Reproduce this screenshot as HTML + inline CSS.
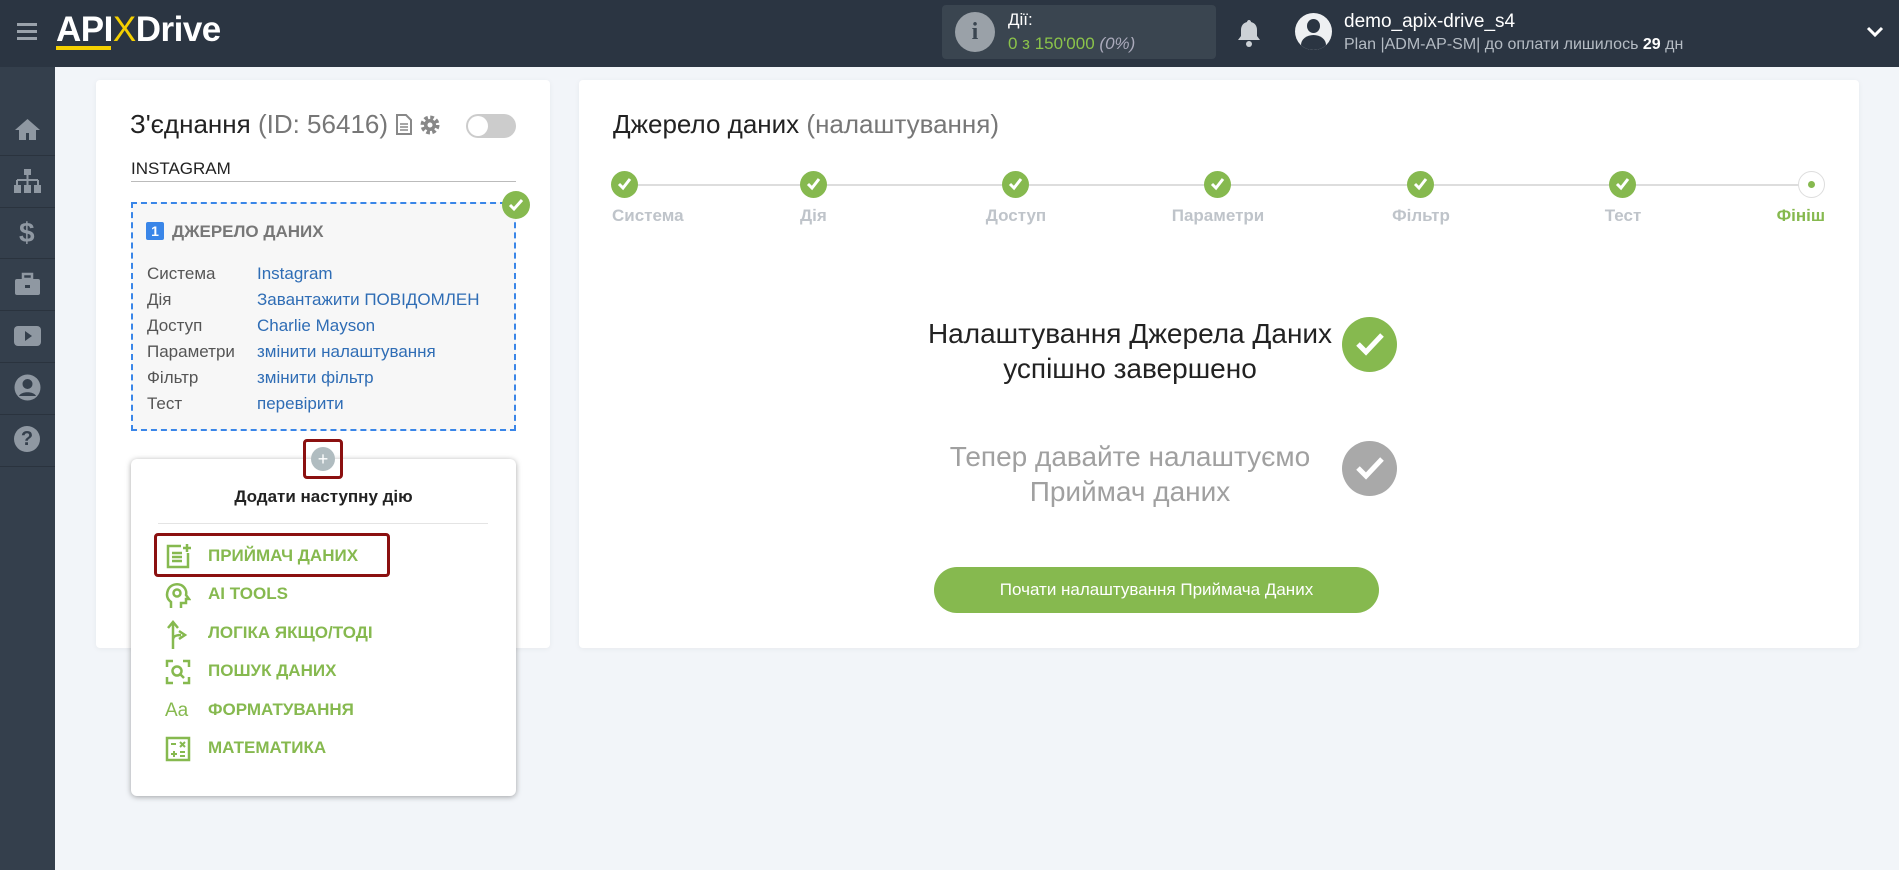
<!DOCTYPE html>
<html><head><meta charset="utf-8"><style>
*{box-sizing:border-box;margin:0;padding:0}
body{width:1899px;height:870px;overflow:hidden;background:#f2f5f9;font-family:"Liberation Sans","Noto Sans CJK SC",sans-serif;position:relative;color:#222}
.abs{position:absolute}
#hdr{left:0;top:0;width:1899px;height:67px;background:#2b3542}
#side{left:0;top:67px;width:55px;height:803px;background:#343f4c}
.sep{position:absolute;left:0;width:55px;height:1px;background:#2a333e}
.card{background:#fff;border-radius:4px;box-shadow:0 1px 6px rgba(0,0,0,.05)}
.row{position:absolute;left:147px;font-size:17px;color:#555}
.val{position:absolute;left:257px;font-size:17px;color:#2f6db5}
.step{position:absolute;top:171px;width:27px;height:27px;border-radius:50%;background:#86b94f}
.step svg{position:absolute;left:6px;top:6px}
.lbl{position:absolute;top:206px;font-size:17px;font-weight:bold;color:#bfc4ca}
.mi{position:absolute;left:208px;font-size:17px;font-weight:bold;color:#86b94f}
.ic{position:absolute;left:165px}
</style></head><body>
<div id="hdr" class="abs"></div>
<div class="abs" style="left:17px;top:23px;width:20px;height:3px;background:#9aa2ab"></div>
<div class="abs" style="left:17px;top:30px;width:20px;height:3px;background:#9aa2ab"></div>
<div class="abs" style="left:17px;top:37px;width:20px;height:3px;background:#9aa2ab"></div>
<div class="abs" style="left:56px;top:10px;font-size:35px;font-weight:bold;color:#fff;letter-spacing:-0.5px">API<span style="color:#f5d000;font-weight:normal">X</span>Drive</div>
<div class="abs" style="left:56px;top:46px;width:55px;height:4px;background:#f5d000"></div>
<div class="abs" style="left:942px;top:5px;width:274px;height:54px;background:#3a4550;border-radius:4px"></div>
<div class="abs" style="left:955px;top:12px;width:40px;height:40px;border-radius:50%;background:#9aa1a8;color:#3a4550;font:bold 24px 'Liberation Serif',serif;text-align:center;line-height:40px">i</div>
<div class="abs" style="left:1008px;top:10px;font-size:17px;color:#fff">Дії:</div>
<div class="abs" style="left:1008px;top:34px;font-size:17px;color:#8bc34a">0 з 150'000 <i style="color:#aab">(0%)</i></div>
<svg class="abs" style="left:1236px;top:18px" width="26" height="30" viewBox="0 0 26 30"><path d="M13 2c1 0 2 1 2 2 4 1 6 4 6 8v6l3 4H2l3-4v-6c0-4 2-7 6-8 0-1 1-2 2-2z" fill="#ccd1d6"/><circle cx="13" cy="26" r="3" fill="#ccd1d6"/></svg>
<div class="abs" style="left:1295px;top:13px;width:37px;height:37px;border-radius:50%;background:#eef0f2;overflow:hidden">
<div class="abs" style="left:12px;top:6px;width:13px;height:14px;border-radius:50%;background:#2b3542"></div>
<div class="abs" style="left:6px;top:22px;width:25px;height:20px;border-radius:50%;background:#2b3542"></div></div>
<div class="abs" style="left:1344px;top:11px;font-size:19px;color:#fff">demo_apix-drive_s4</div>
<div class="abs" style="left:1344px;top:36px;font-size:16px;color:#b5bcc4">Plan |ADM-AP-SM| до оплати лишилось <b style="color:#fff">29</b> дн</div>
<svg class="abs" style="left:1866px;top:26px" width="18" height="12"><path d="M2 2l7 7 7-7" stroke="#fff" stroke-width="3" fill="none"/></svg>

<div id="side" class="abs">
<div class="sep" style="top:88px"></div><div class="sep" style="top:140px"></div><div class="sep" style="top:191px"></div><div class="sep" style="top:243px"></div><div class="sep" style="top:295px"></div><div class="sep" style="top:347px"></div><div class="sep" style="top:399px"></div>
</div>
<svg class="abs" style="left:14px;top:117px" width="27" height="24"><path d="M13.5 2L1 13h4v10h7v-7h3v7h7V13h4z" fill="#8f98a2"/></svg>
<svg class="abs" style="left:13px;top:168px" width="29" height="26"><rect x="11" y="1" width="7" height="6" fill="#8f98a2"/><path d="M14.5 7v5M4 12h21M4 12v5M14.5 12v5M25 12v5" stroke="#8f98a2" stroke-width="2"/><rect x="1" y="17" width="7" height="8" fill="#8f98a2"/><rect x="11" y="17" width="7" height="8" fill="#8f98a2"/><rect x="21" y="17" width="7" height="8" fill="#8f98a2"/></svg>
<div class="abs" style="left:19px;top:217px;font-size:28px;font-weight:bold;color:#8f98a2">$</div>
<svg class="abs" style="left:14px;top:272px" width="27" height="24"><rect x="9" y="2" width="9" height="5" fill="none" stroke="#8f98a2" stroke-width="2.5"/><rect x="1" y="7" width="25" height="16" rx="2" fill="#8f98a2"/><rect x="11" y="13" width="5" height="3" fill="#343f4c"/></svg>
<svg class="abs" style="left:14px;top:325px" width="27" height="22"><rect x="0" y="1" width="27" height="20" rx="4" fill="#8f98a2"/><path d="M11 6l7 5-7 5z" fill="#343f4c"/></svg>
<svg class="abs" style="left:14px;top:374px" width="27" height="27"><circle cx="13.5" cy="13.5" r="13" fill="#8f98a2"/><circle cx="13.5" cy="10" r="5" fill="#343f4c"/><path d="M5 22c2-5 15-5 17 0" fill="#343f4c"/></svg>
<div class="abs" style="left:14px;top:426px;width:26px;height:26px;border-radius:50%;background:#8f98a2;color:#343f4c;font-weight:bold;font-size:20px;text-align:center;line-height:26px">?</div>

<div class="abs card" style="left:96px;top:80px;width:454px;height:568px"></div>
<div class="abs" style="left:130px;top:109px;font-size:26px;color:#222">З'єднання <span style="color:#777">(ID: 56416)</span></div>
<svg class="abs" style="left:396px;top:114px" width="16" height="21"><path d="M1 1h9l5 5v14H1z" fill="none" stroke="#888" stroke-width="2"/><path d="M4 10h8M4 13h8M4 16h8" stroke="#888" stroke-width="1.5"/></svg>
<svg class="abs" style="left:419px;top:114px" width="22" height="22" viewBox="0 0 22 22"><circle cx="11" cy="11" r="7" fill="none" stroke="#888" stroke-width="5" stroke-dasharray="3.3 2.2"/><circle cx="11" cy="11" r="6" fill="#888"/><circle cx="11" cy="11" r="2.5" fill="#fff"/></svg>
<div class="abs" style="left:466px;top:114px;width:50px;height:24px;border-radius:12px;background:#ccc"><div class="abs" style="left:2px;top:2px;width:20px;height:20px;border-radius:50%;background:#fff"></div></div>
<div class="abs" style="left:131px;top:159px;font-size:17px;color:#222">INSTAGRAM</div>
<div class="abs" style="left:131px;top:181px;width:385px;height:1px;background:#bbb"></div>
<div class="abs" style="left:131px;top:202px;width:385px;height:229px;border:2px dashed #3a86e8;background:#f7f7f7"></div>
<div class="abs" style="left:502px;top:191px;width:28px;height:28px;border-radius:50%;background:#86b94f"><svg class="abs" style="left:6px;top:7px" width="16" height="14"><path d="M2 7l4 4 8-9" stroke="#fff" stroke-width="3" fill="none"/></svg></div>
<div class="abs" style="left:146px;top:222px;width:18px;height:18px;background:#3a86e8;border-radius:2px;color:#fff;font-size:14px;font-weight:bold;text-align:center;line-height:18px">1</div>
<div class="abs" style="left:172px;top:222px;font-size:17px;font-weight:bold;color:#777">ДЖЕРЕЛО ДАНИХ</div>
<div class="row" style="top:264px">Система</div><div class="val" style="top:264px">Instagram</div>
<div class="row" style="top:290px">Дія</div><div class="val" style="top:290px">Завантажити ПОВІДОМЛЕН</div>
<div class="row" style="top:316px">Доступ</div><div class="val" style="top:316px">Charlie Mayson</div>
<div class="row" style="top:342px">Параметри</div><div class="val" style="top:342px">змінити налаштування</div>
<div class="row" style="top:368px">Фільтр</div><div class="val" style="top:368px">змінити фільтр</div>
<div class="row" style="top:394px">Тест</div><div class="val" style="top:394px">перевірити</div>

<div class="abs" style="left:131px;top:459px;width:385px;height:337px;background:#fff;border-radius:6px;box-shadow:0 1px 6px rgba(0,0,0,.35)"></div>
<div class="abs" style="left:303px;top:439px;width:40px;height:40px;border:3px solid #8b1010;border-radius:4px"></div>
<div class="abs" style="left:311px;top:447px;width:24px;height:24px;border-radius:50%;background:#b0bcc0;color:#fff;text-align:center;line-height:24px;font-size:18px">+</div>
<div class="abs" style="left:131px;top:487px;width:385px;text-align:center;font-size:17px;font-weight:bold;color:#222">Додати наступну дію</div>
<div class="abs" style="left:158px;top:523px;width:330px;height:1px;background:#e4e4e4"></div>
<div class="abs" style="left:154px;top:533px;width:236px;height:44px;border:3px solid #8b1010;border-radius:4px"></div>
<div class="mi" style="top:546px">ПРИЙМАЧ ДАНИХ</div>
<div class="mi" style="top:584px">AI TOOLS</div>
<div class="mi" style="top:623px">ЛОГІКА ЯКЩО/ТОДІ</div>
<div class="mi" style="top:661px">ПОШУК ДАНИХ</div>
<div class="mi" style="top:700px">ФОРМАТУВАННЯ</div>
<div class="mi" style="top:738px">МАТЕМАТИКА</div>
<svg class="ic" style="top:543px" width="26" height="26"><path d="M16 3H3v21h20V10" fill="none" stroke="#86b94f" stroke-width="2.5"/><path d="M7 10h10M7 14h10M7 18h10M22 1v8M18 5h8" stroke="#86b94f" stroke-width="2.5"/></svg>
<svg class="ic" style="top:582px" width="26" height="28"><path d="M6 26v-6C2 17 1 13 3 8c2-5 8-7 13-5 4 2 6 6 5 10l3 4h-3v4h-5v5" fill="none" stroke="#86b94f" stroke-width="2.5"/><circle cx="12" cy="11" r="3.5" fill="none" stroke="#86b94f" stroke-width="2.5"/></svg>
<svg class="ic" style="top:620px" width="26" height="30"><path d="M8 29V3M3 8l5-6 5 6M8 20c0-4 3-5 8-5M14 11l6 4-6 4" fill="none" stroke="#86b94f" stroke-width="2.5"/></svg>
<svg class="ic" style="top:659px" width="26" height="26"><path d="M2 8V2h6M18 2h6v6M24 18v6h-6M8 24H2v-6" fill="none" stroke="#86b94f" stroke-width="2.5"/><circle cx="12" cy="12" r="4.5" fill="none" stroke="#86b94f" stroke-width="2.5"/><path d="M15 15l4 4" stroke="#86b94f" stroke-width="2.5"/></svg>
<div class="abs" style="left:165px;top:700px;font-size:19px;color:#86b94f">Aa</div>
<svg class="ic" style="top:736px" width="26" height="26"><rect x="2" y="2" width="22" height="22" fill="none" stroke="#86b94f" stroke-width="2.5"/><path d="M6 8h5M15 6l5 5M20 6l-5 5M6 18h6M9 15v6M15 16h5M15 20h5" stroke="#86b94f" stroke-width="2"/></svg>

<div class="abs card" style="left:579px;top:80px;width:1280px;height:568px"></div>
<div class="abs" style="left:613px;top:109px;font-size:26px;color:#222">Джерело даних <span style="color:#777">(налаштування)</span></div>
<div class="abs" style="left:625px;top:184px;width:1187px;height:2px;background:#ddd"></div>
<div class="step" style="left:611px"><svg width="15" height="14"><path d="M2 7l4 4 7-9" stroke="#fff" stroke-width="3" fill="none"/></svg></div>
<div class="step" style="left:800px"><svg width="15" height="14"><path d="M2 7l4 4 7-9" stroke="#fff" stroke-width="3" fill="none"/></svg></div>
<div class="step" style="left:1002px"><svg width="15" height="14"><path d="M2 7l4 4 7-9" stroke="#fff" stroke-width="3" fill="none"/></svg></div>
<div class="step" style="left:1204px"><svg width="15" height="14"><path d="M2 7l4 4 7-9" stroke="#fff" stroke-width="3" fill="none"/></svg></div>
<div class="step" style="left:1407px"><svg width="15" height="14"><path d="M2 7l4 4 7-9" stroke="#fff" stroke-width="3" fill="none"/></svg></div>
<div class="step" style="left:1609px"><svg width="15" height="14"><path d="M2 7l4 4 7-9" stroke="#fff" stroke-width="3" fill="none"/></svg></div>
<div class="step" style="left:1798px;background:#fff;border:1px solid #ddd"><div class="abs" style="left:9px;top:9px;width:7px;height:7px;border-radius:50%;background:#86b94f"></div></div>
<div class="lbl" style="left:612px">Система</div>
<div class="lbl" style="left:800px">Дія</div>
<div class="lbl" style="left:966px;width:100px;text-align:center">Доступ</div>
<div class="lbl" style="left:1158px;width:120px;text-align:center">Параметри</div>
<div class="lbl" style="left:1371px;width:100px;text-align:center">Фільтр</div>
<div class="lbl" style="left:1573px;width:100px;text-align:center">Тест</div>
<div class="lbl" style="left:1725px;width:100px;text-align:right;color:#86b94f">Фініш</div>

<div class="abs" style="left:880px;top:316px;width:500px;text-align:center;font-size:28px;line-height:35px;color:#222">Налаштування Джерела Даних<br>успішно завершено</div>
<div class="abs" style="left:1342px;top:317px;width:55px;height:55px;border-radius:50%;background:#86b94f"><svg class="abs" style="left:13px;top:14px" width="30" height="26"><path d="M3 13l8 8L27 4" stroke="#fff" stroke-width="5" fill="none"/></svg></div>
<div class="abs" style="left:880px;top:439px;width:500px;text-align:center;font-size:28px;line-height:35px;color:#a0a0a0">Тепер давайте налаштуємо<br>Приймач даних</div>
<div class="abs" style="left:1342px;top:441px;width:55px;height:55px;border-radius:50%;background:#a9a9a9"><svg class="abs" style="left:13px;top:14px" width="30" height="26"><path d="M3 13l8 8L27 4" stroke="#fff" stroke-width="5" fill="none"/></svg></div>
<div class="abs" style="left:934px;top:567px;width:445px;height:46px;border-radius:23px;background:#86b94f;color:#fff;font-size:17px;text-align:center;line-height:46px">Почати налаштування Приймача Даних</div>
</body></html>
